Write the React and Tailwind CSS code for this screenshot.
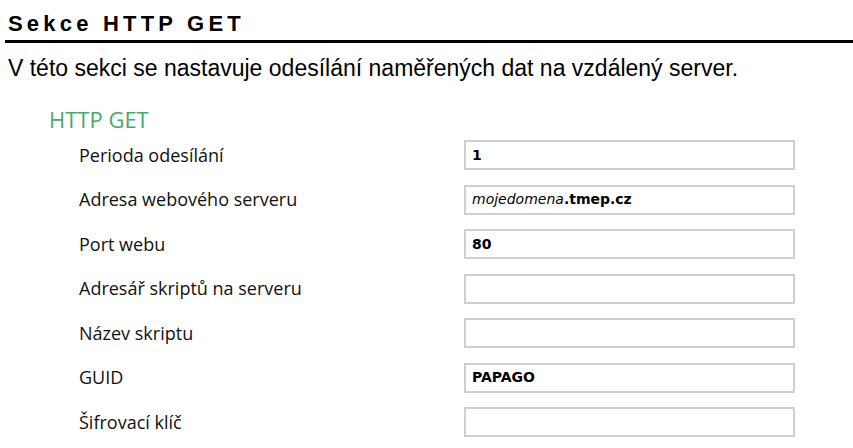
import React from "react";

const rows = [
  { label: "Perioda odesílání", value: <b>1</b> },
  {
    label: "Adresa webového serveru",
    value: (
      <>
        <i>mojedomena</i>
        <b>.tmep.cz</b>
      </>
    ),
  },
  { label: "Port webu", value: <b>80</b> },
  { label: "Adresář skriptů na serveru", value: null },
  { label: "Název skriptu", value: null },
  { label: "GUID", value: <b>PAPAGO</b> },
  { label: "Šifrovací klíč", value: null },
];

export default function App() {
  return (
    <div className="w-[853px] h-[448px] overflow-hidden bg-white">
      <div className="pl-[8px] pt-[11px]">
        <h1
          className="text-[22px] leading-[26px] font-bold tracking-[4.2px] text-black"
          style={{ fontFamily: '"Liberation Sans", Arial, sans-serif' }}
        >
          Sekce HTTP GET
        </h1>
      </div>
      <div className="ml-[5px] mt-[3px] h-[3px] bg-black" />
      <p
        className="pl-[8px] mt-[12px] text-[23px] leading-[26px] text-black"
        style={{ fontFamily: '"Liberation Sans", Arial, sans-serif' }}
      >
        V této sekci se nastavuje odesílání naměřených dat na vzdálený server.
      </p>
      <div className="pl-[49px] mt-[25px]" style={{ fontFamily: '"Open Sans", "Noto Sans", sans-serif' }}>
        <div className="text-[22px] leading-[26px] text-[#46ab66]">HTTP GET</div>
      </div>
      <div className="mt-[8px] flex flex-col gap-[14.5px]" style={{ fontFamily: '"Open Sans", "Noto Sans", sans-serif' }}>
        {rows.map((r) => (
          <div key={r.label} className="flex items-center h-[30px]">
            <div className="w-[464px] pl-[79px] text-[18px] text-[#111]">{r.label}</div>
            <div
              className="w-[331px] h-[30px] border-2 border-[#cfcfcf] flex items-center pl-[6px] text-[14px] text-black"
              style={{ fontFamily: '"DejaVu Sans", Verdana, sans-serif' }}
            >
              {r.value}
            </div>
          </div>
        ))}
      </div>
    </div>
  );
}
